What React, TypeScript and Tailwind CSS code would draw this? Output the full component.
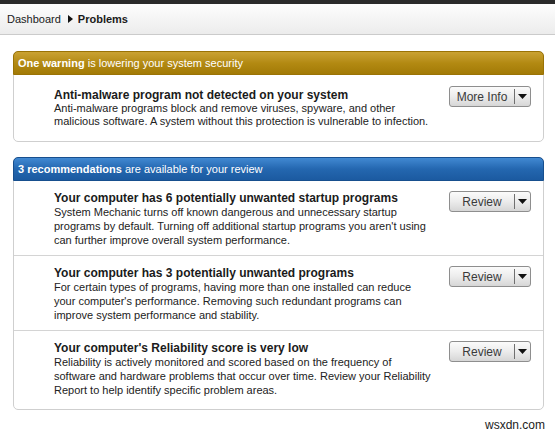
import type { ReactNode } from 'react';

const body = "font-['Liberation_Sans',Arial,sans-serif]";

function SplitButton({ label, className }: { label: string; className: string }) {
  return (
    <div
      className={`flex h-[21px] w-[82px] shrink-0 items-stretch rounded-[3px] border border-[#8e8e8e] bg-gradient-to-b from-[#fbfbfb] via-[#ececec] to-[#d6d6d6] text-[12px] text-[#3a3a3a] ${className}`}
    >
      <span className="flex flex-1 items-center justify-center">{label}</span>
      <span className="my-[2px] w-px bg-[#6f6f6f]" />
      <span className="flex w-[15px] items-center justify-center">
        <svg width="9" height="5" viewBox="0 0 9 5">
          <path d="M0 0h9L4.5 5z" fill="#111" />
        </svg>
      </span>
    </div>
  );
}

function Item({
  title,
  lines,
  button,
  lead,
  className,
  btnCls,
}: {
  title: string;
  lines: string[];
  button: string;
  lead: string;
  className: string;
  btnCls: string;
}) {
  return (
    <div className={`flex items-start pl-[40px] pr-[12px] ${className}`}>
      <div className="flex-1 whitespace-nowrap">
        <div className={`text-[12px] font-bold text-[#1b1b1b] ${lead}`}>{title}</div>
        {lines.map((l) => (
          <div key={l} className={`text-[11px] text-[#222] ${lead}`}>
            {l}
          </div>
        ))}
      </div>
      <SplitButton label={button} className={btnCls} />
    </div>
  );
}

function Panel({
  head,
  tone,
  children,
}: {
  head: ReactNode;
  tone: 'gold' | 'blue';
  children: ReactNode;
}) {
  const headCls =
    tone === 'gold'
      ? 'bg-gradient-to-b from-[#caa232] via-[#b38a12] to-[#a27a06] border-[#9a7305]'
      : 'bg-gradient-to-b from-[#4189d2] via-[#2467b0] to-[#1b5aa0] border-[#174f8e]';
  return (
    <div className="rounded-[5px] border border-[#cfcfcf] bg-white">
      <div
        className={`-mx-px -mt-px flex h-[24px] items-center rounded-t-[5px] border px-[4px] text-[11px] text-white ${headCls}`}
      >
        {head}
      </div>
      {children}
    </div>
  );
}

export default function App() {
  return (
    <div className={`h-[435px] w-[555px] overflow-hidden bg-white ${body}`}>
      <div className="h-[4px] bg-[#2a2a2a]" />
      <div className="flex h-[31px] items-center border-b border-[#cbcbcb] bg-gradient-to-b from-[#fdfdfd] to-[#ececec] px-[7px] text-[11px] text-[#1a1a1a]">
        <span>Dashboard</span>
        <svg className="ml-[7px] mr-[5px]" width="5" height="8" viewBox="0 0 5 8">
          <path d="M0 0l5 4-5 4z" fill="#111" />
        </svg>
        <span className="font-bold">Problems</span>
      </div>

      <div className="flex flex-col gap-[15px] px-[13px] pr-[11px] pt-[16px]">
        <Panel
          tone="gold"
          head={
            <span>
              <b>One warning</b> is lowering your system security
            </span>
          }
        >
          <Item
            className="pb-[13px] pt-[14px]"
            btnCls="-mt-[3px]"
            lead="leading-[13px]"
            title="Anti-malware program not detected on your system"
            lines={[
              'Anti-malware programs block and remove viruses, spyware, and other',
              'malicious software. A system without this protection is vulnerable to infection.',
            ]}
            button="More Info"
          />
        </Panel>

        <Panel
          tone="blue"
          head={
            <span>
              <b>3 recommendations</b> are available for your review
            </span>
          }
        >
          <div className="flex flex-col divide-y divide-[#d4d4d4]">
            <Item
              className="h-[75px] pt-[10px]"
              btnCls="mt-0"
              lead="leading-[14px]"
              title="Your computer has 6 potentially unwanted startup programs"
              lines={[
                'System Mechanic turns off known dangerous and unnecessary startup',
                "programs by default. Turning off additional startup programs you aren't using",
                'can further improve overall system performance.',
              ]}
              button="Review"
            />
            <Item
              className="h-[75px] pt-[10px]"
              btnCls="mt-0"
              lead="leading-[14px]"
              title="Your computer has 3 potentially unwanted programs"
              lines={[
                'For certain types of programs, having more than one installed can reduce',
                "your computer's performance. Removing such redundant programs can",
                'improve system performance and stability.',
              ]}
              button="Review"
            />
            <Item
              className="h-[78px] pt-[10px]"
              btnCls="mt-0"
              lead="leading-[14px]"
              title="Your computer's Reliability score is very low"
              lines={[
                'Reliability is actively monitored and scored based on the frequency of',
                'software and hardware problems that occur over time. Review your Reliability',
                'Report to help identify specific problem areas.',
              ]}
              button="Review"
            />
          </div>
        </Panel>
      </div>

      <div className="mt-[6px] pr-[10px] text-right text-[12px] text-[#222]">wsxdn.com</div>
    </div>
  );
}
